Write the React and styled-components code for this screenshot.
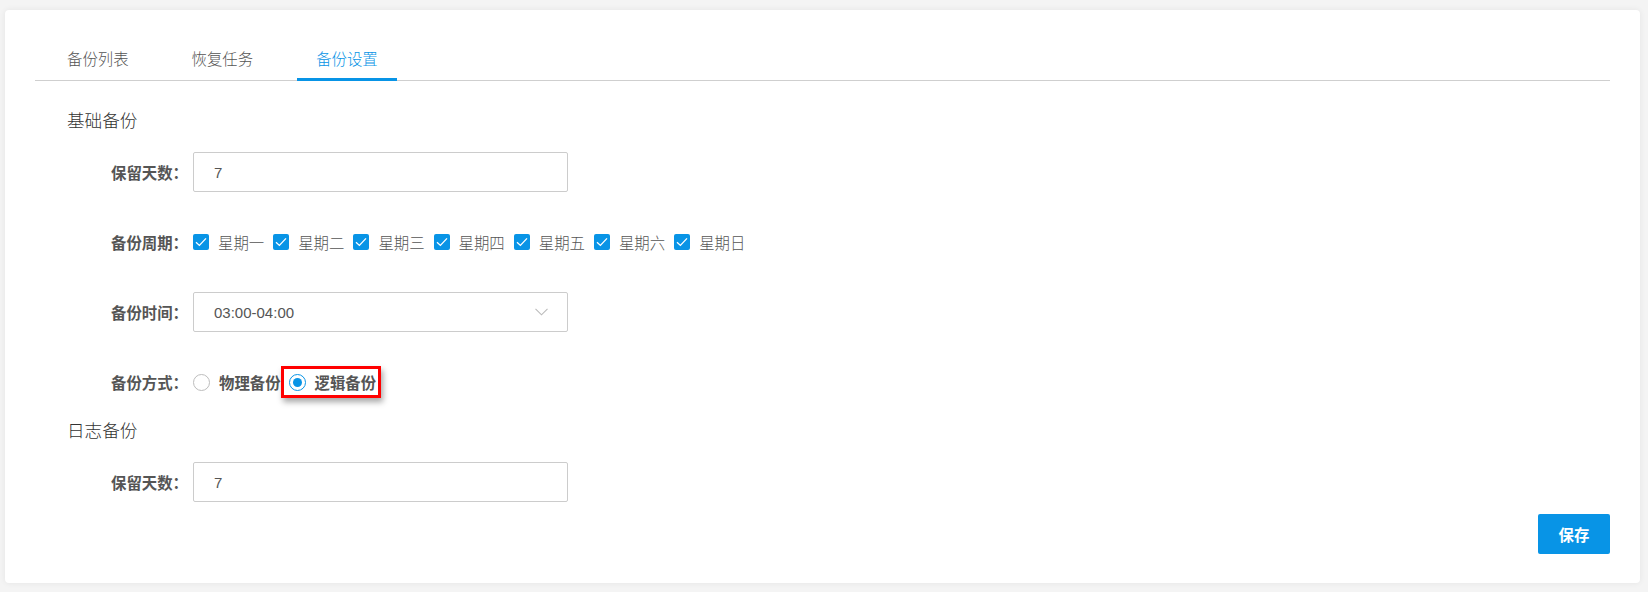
import React, { useState } from 'react';
import styled, { createGlobalStyle } from 'styled-components';

const BLUE = '#0894e6';
const FONT = '"Liberation Sans", "Noto Sans CJK SC", sans-serif';

const GlobalStyle = createGlobalStyle`
  html, body {
    margin: 0;
    padding: 0;
    background: #f4f4f4;
    font-family: ${FONT};
  }
  * { box-sizing: border-box; }
`;

const Page = styled.div`
  padding: 10px 8px 8px 5px;
`;

const Card = styled.div`
  background: #fff;
  border-radius: 4px;
  box-shadow: 0 0 6px rgba(0, 0, 0, 0.07);
  padding: 30px 30px 29px 30px;
`;

const TabBar = styled.div`
  display: flex;
  height: 41px;
  border-bottom: 1px solid #cfcfcf;
  padding-left: 13px;
  gap: 25px;
`;

const Tab = styled.div`
  position: relative;
  padding: 0 19px;
  height: 40px;
  line-height: 40px;
  font-size: 15.4px;
  font-weight: 300;
  color: ${p => (p.$active ? BLUE : '#555')};
  cursor: pointer;

  &::after {
    content: '';
    display: ${p => (p.$active ? 'block' : 'none')};
    position: absolute;
    left: 0;
    right: 0;
    bottom: -1px;
    height: 3px;
    background: ${BLUE};
  }
`;

const Section = styled.div`
  margin-top: ${p => p.$top}px;
`;

const Heading = styled.div`
  padding-left: 32px;
  font-size: 17.6px;
  font-weight: 300;
  line-height: 24px;
  color: #333;
  margin-bottom: 19px;
`;

const Rows = styled.div`
  display: flex;
  flex-direction: column;
  gap: 30px;
`;

const Row = styled.div`
  display: grid;
  grid-template-columns: 153px 1fr;
  column-gap: 5px;
  align-items: center;
  height: 40px;
`;

const Label = styled.div`
  text-align: right;
  font-size: 15.4px;
  font-weight: bold;
  color: #555;
  white-space: nowrap;
`;

const TextInput = styled.input`
  width: 375px;
  height: 40px;
  border: 1px solid #ccc;
  border-radius: 2px;
  padding: 0 20px;
  font-family: ${FONT};
  font-size: 15px;
  color: #555;
  outline: none;
`;

const Select = styled.div`
  width: 375px;
  height: 40px;
  border: 1px solid #ccc;
  border-radius: 2px;
  padding: 0 19px 0 20px;
  display: flex;
  align-items: center;
  justify-content: space-between;
  font-size: 15px;
  color: #555;
`;

const Options = styled.div`
  display: flex;
  align-items: center;
  gap: 9px;
`;

const CheckItem = styled.label`
  display: inline-flex;
  align-items: center;
  gap: 9px;
  font-size: 15.4px;
  font-weight: 300;
  color: #555;
  cursor: pointer;
`;

const Box = styled.span`
  width: 16px;
  height: 16px;
  border-radius: 2px;
  background: ${BLUE};
  display: inline-flex;
  align-items: center;
  justify-content: center;
`;

const RadioGroup = styled.div`
  display: flex;
  align-items: center;
`;

const RadioItem = styled.label`
  display: inline-flex;
  align-items: center;
  gap: 9px;
  height: 26px;
  font-size: 15.4px;
  font-weight: bold;
  color: #555;
  cursor: pointer;
  padding: ${p => (p.$mark ? '0 2px 0 5px' : '0')};
  margin-left: ${p => (p.$mark ? '3px' : '0')};
  box-shadow: ${p =>
    p.$mark ? '0 0 0 3px #f00, 2px 4px 6px 3px rgba(0, 0, 0, 0.35)' : 'none'};
`;

const Circle = styled.span`
  width: 17px;
  height: 17px;
  border-radius: 50%;
  border: ${p => (p.$on ? `1.5px solid ${BLUE}` : '1px solid #bdbdbd')};
  display: inline-flex;
  align-items: center;
  justify-content: center;
  background: #fff;

  &::after {
    content: '';
    display: ${p => (p.$on ? 'block' : 'none')};
    width: 9px;
    height: 9px;
    border-radius: 50%;
    background: ${BLUE};
  }
`;

const Footer = styled.div`
  display: flex;
  justify-content: flex-end;
  margin-top: 12px;
`;

const SaveButton = styled.button`
  width: 72px;
  height: 40px;
  border: none;
  border-radius: 2px;
  background: ${BLUE};
  color: #fff;
  font-family: ${FONT};
  font-size: 15.4px;
  font-weight: bold;
  cursor: pointer;
`;

const Check = () => (
  <svg width="12" height="10" viewBox="0 0 12 10">
    <path d="M1 5.2 L4.4 8.4 L11 1.4" fill="none" stroke="#fff" strokeWidth="1.3" />
  </svg>
);

const Chevron = () => (
  <svg width="13" height="8" viewBox="0 0 13 8">
    <path d="M0.5 0.8 L6.5 6.8 L12.5 0.8" fill="none" stroke="#bbb" strokeWidth="1.1" />
  </svg>
);

const days = ['星期一', '星期二', '星期三', '星期四', '星期五', '星期六', '星期日'];

export default function App() {
  const [mode, setMode] = useState('logic');

  return (
    <Page>
      <GlobalStyle />
      <Card>
        <TabBar>
          <Tab>备份列表</Tab>
          <Tab>恢复任务</Tab>
          <Tab $active>备份设置</Tab>
        </TabBar>

        <Section $top={28}>
          <Heading>基础备份</Heading>
          <Rows>
            <Row>
              <Label>保留天数：</Label>
              <TextInput defaultValue="7" />
            </Row>
            <Row>
              <Label>备份周期：</Label>
              <Options>
                {days.map(d => (
                  <CheckItem key={d}>
                    <Box><Check /></Box>
                    {d}
                  </CheckItem>
                ))}
              </Options>
            </Row>
            <Row>
              <Label>备份时间：</Label>
              <Select>
                <span>03:00-04:00</span>
                <Chevron />
              </Select>
            </Row>
            <Row>
              <Label>备份方式：</Label>
              <RadioGroup>
                <RadioItem onClick={() => setMode('physical')}>
                  <Circle $on={mode === 'physical'} />
                  物理备份
                </RadioItem>
                <RadioItem $mark onClick={() => setMode('logic')}>
                  <Circle $on={mode === 'logic'} />
                  逻辑备份
                </RadioItem>
              </RadioGroup>
            </Row>
          </Rows>
        </Section>

        <Section $top={17}>
          <Heading>日志备份</Heading>
          <Rows>
            <Row>
              <Label>保留天数：</Label>
              <TextInput defaultValue="7" />
            </Row>
          </Rows>
        </Section>

        <Footer>
          <SaveButton>保存</SaveButton>
        </Footer>
      </Card>
    </Page>
  );
}
